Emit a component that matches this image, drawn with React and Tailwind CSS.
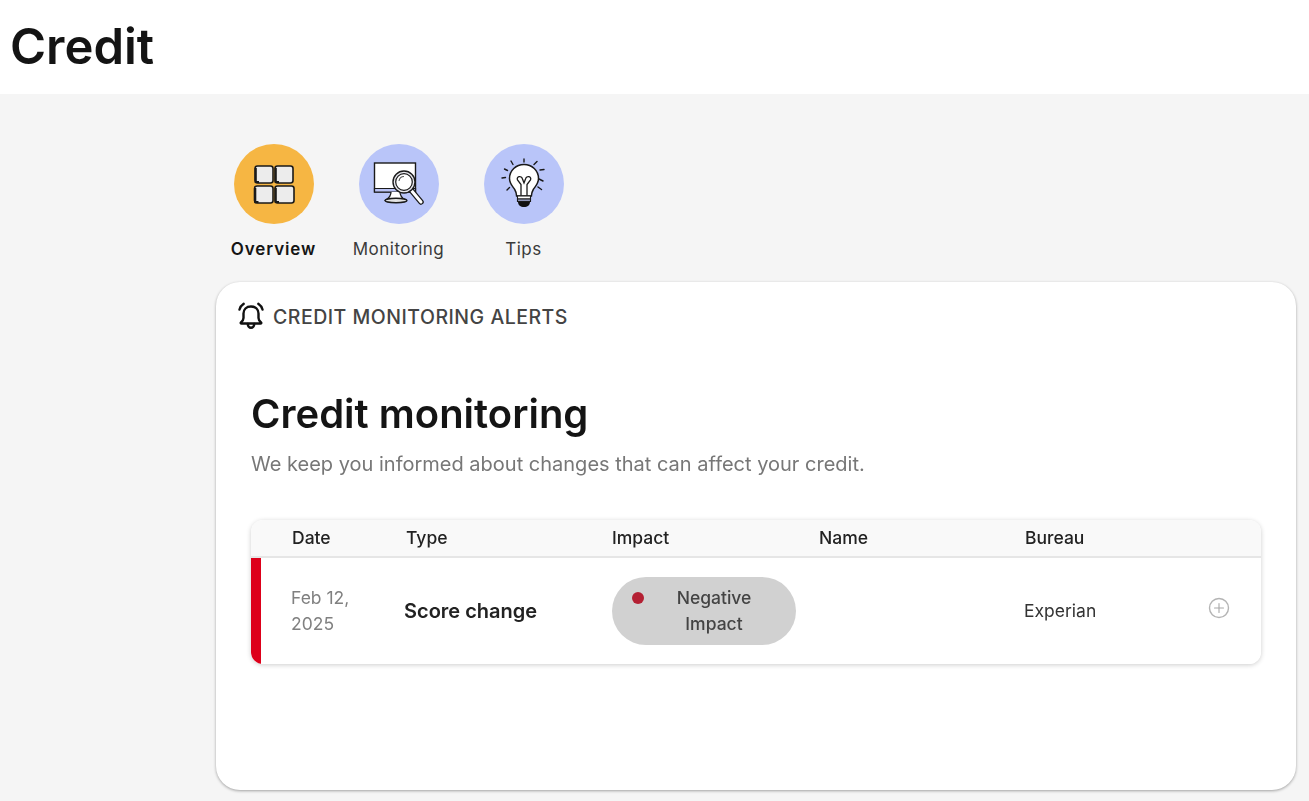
const OverviewIcon = () => (
  <svg width="42" height="40" viewBox="0 0 42 40" fill="none">
    {[
      [2, 2, 18, 17],
      [22, 2, 18, 17],
      [1.5, 22, 18.5, 17],
      [22, 22, 19, 17],
    ].map(([x, y, w, h]) => (
      <g key={`${x}-${y}`}>
        <rect x={x} y={y} width={w} height={h} rx="2.5" fill="#ececec" stroke="#1a1a1a" strokeWidth="1.6" />
        <path d={`M${x + 0.8} ${y + 2}V${y + h - 1}H${x + 4}`} stroke="#1a1a1a" strokeWidth="2" />
      </g>
    ))}
  </svg>
);

const MonitoringIcon = () => (
  <svg width="52" height="48" viewBox="0 0 52 48" fill="none">
    <rect x="1.500" y="3" width="41" height="29" fill="#fff" stroke="#1a1a1a" strokeWidth="1.400" />
    <path d="M1.500 28.500h41V32h-41z" fill="#b9c2f5" stroke="#1a1a1a" strokeWidth="1.200" />
    <path d="M18 32c0 4-2 6-5 8h19c-3-2-5-4-5-8" fill="#fff" stroke="#1a1a1a" strokeWidth="1.300" />
    <ellipse cx="23" cy="40.500" rx="11" ry="2.200" fill="#e4e4e4" stroke="#1a1a1a" strokeWidth="1.400" />
    <path d="M38 30l10 12" stroke="#1a1a1a" strokeWidth="5.500" strokeLinecap="round" />
    <path d="M38 30l10 12" stroke="#fff" strokeWidth="3" strokeLinecap="round" />
    <circle cx="31" cy="22" r="11" fill="#e8e8ee" stroke="#1a1a1a" strokeWidth="1.400" />
    <circle cx="31" cy="22" r="8.300" fill="#fff" stroke="#1a1a1a" strokeWidth="1.200" />
    <path d="M26 21c.5-3 2.500-4.500 5-4.500" stroke="#555" strokeWidth="1.100" />
  </svg>
);

const TipsIcon = () => (
  <svg width="46" height="52" viewBox="0 0 46 52" fill="none">
    <g stroke="#1a1a1a" strokeWidth="1.400" strokeLinecap="round">
      <path d="M23 1v3M10 3l2 3.500M36 3.500l-3 3M3.500 11l3 1.500M43 11.500l-4 .5M1 20l3.500-.5M38 21l4 2M6 32l2.500-2.500M37 29l3.500 2.500" />
    </g>
    <path d="M23 6.500c-8 0-14.500 6-14.500 14 0 5 3.200 8 5.200 11 1.300 2 1.700 4 1.900 6.500h14.800c.2-2.500.6-4.500 1.900-6.500 2-3 5.200-6 5.200-11 0-8-6.500-14-14.500-14z" fill="#fff" stroke="#1a1a1a" strokeWidth="1.500" />
    <path d="M20 37.500v-11l-3.500-4.500c-1.600-3.500 4.200-5 5-1l1.500 4 1.500-4c.8-4 6.600-2.500 5 1L26 26.500v11" stroke="#1a1a1a" strokeWidth="1.300" />
    <path d="M16.500 38h13v3h-13z" fill="#fff" stroke="#1a1a1a" strokeWidth="1.100" />
    <path d="M16.500 41h13v2.500h-13z" fill="#8f96b8" stroke="#1a1a1a" strokeWidth="1.100" />
    <path d="M17 44h12c0 3-2.500 5-6 5s-6-2-6-5z" fill="#111" />
  </svg>
);

const BellIcon = () => (
  <svg width="26" height="28" viewBox="0 0 26 28" fill="none" stroke="#111" strokeWidth="2.400" strokeLinecap="round" strokeLinejoin="round">
    <path d="M13 4.500c-4.800 0-7.500 3-7.500 7v4.500c0 1.800-1 3-2.500 4.300-.6.600-.2 1.200.5 1.200h19c.7 0 1.100-.6.500-1.200C21.500 19 20.500 17.800 20.500 16v-4.500c0-4-2.700-7-7.500-7z" />
    <path d="M9.800 22c0 2.200 1.400 3.800 3.200 3.800s3.200-1.600 3.200-3.800" />
    <path d="M1.500 7.500C2.200 5 3.600 3.200 5.700 1.800M24.500 7.500c-.7-2.500-2.100-4.300-4.200-5.700" />
  </svg>
);

const PlusCircle = () => (
  <svg width="22" height="22" viewBox="0 0 22 22" fill="none" stroke="#b4b4b4" strokeWidth="1.400" strokeLinecap="round">
    <circle cx="11" cy="11" r="9.500" />
    <path d="M11 6.500v9M6.500 11h9" stroke="#a8a8a8" strokeWidth="1.100" />
  </svg>
);

const tabs = [
  { label: "Overview", active: true, Icon: OverviewIcon },
  { label: "Monitoring", active: false, Icon: MonitoringIcon },
  { label: "Tips", active: false, Icon: TipsIcon },
];

export default function App() {
  return (
    <div className="h-[801px] overflow-hidden bg-[#f5f5f5] font-['Inter',sans-serif] text-[#141414]">
      <header className="flex h-[94px] items-start bg-white pl-[10px] pt-[18px]">
        <h1 className="text-[49px] leading-[58px] font-semibold">Credit</h1>
      </header>

      <main className="pl-[216px] pr-[13px]">
        <nav className="ml-[-5px] flex pt-[50px]">
          {tabs.map(({ label, active, Icon }) => (
            <div key={label} className="flex w-[125px] flex-col items-center">
              <div className={`flex h-20 w-20 items-center justify-center rounded-full ${active ? "bg-[#f6b643]" : "bg-[#b9c5f9]"}`}>
                <Icon />
              </div>
              <span className={`mt-[13px] text-[17px] leading-[24px] ${active ? "font-semibold tracking-[0.9px]" : "tracking-[0.5px] text-[#3a3a3a]"}`}>
                {label}
              </span>
            </div>
          ))}
        </nav>

        <section className="mt-[21px] h-[508px] rounded-[24px] bg-white pl-[22px] pt-[20px] shadow-[0_1px_3px_rgba(0,0,0,0.35)]">
          <div className="flex items-start gap-[9px]">
            <BellIcon />
            <h2 className="pt-[1px] text-[19.500px] leading-[28px] font-medium tracking-[0.5px] text-[#444]">
              CREDIT MONITORING ALERTS
            </h2>
          </div>

          <div className="pl-[13px] pr-[35px] pt-[59px] blur-[0.4px]">
            <h3 className="text-[40px] leading-[48px] font-semibold">Credit monitoring</h3>
            <p className="mt-[12px] text-[20px] leading-[28px] text-[#777]">
              We keep you informed about changes that can affect your credit.
            </p>

            <div className="mt-[42px] overflow-hidden rounded-[12px] shadow-[0_1px_5px_rgba(0,0,0,0.2)]">
              <div className="grid h-[38px] grid-cols-[114px_206px_207px_206px_1fr] items-center border-b-2 border-[#e6e6e6] bg-[#f9f9f9] pl-[41px] text-[17.500px] font-medium text-[#222]">
                <span>Date</span>
                <span>Type</span>
                <span>Impact</span>
                <span>Name</span>
                <span>Bureau</span>
              </div>
              <div className="grid h-[106px] grid-cols-[113px_208px_207px_205px_185px_1fr] items-center border-l-[10px] border-[#dd001a] bg-white pl-[30px] text-[17.500px]">
                <span className="w-[70px] leading-[26px] text-[#808080]">Feb 12, 2025</span>
                <span className="text-[20px] font-semibold text-[#222]">Score change</span>
                <div className="relative flex h-[68px] w-[184px] items-center justify-center rounded-[34px] bg-[#d1d1d1] pl-[20px]">
                  <span className="absolute left-[20px] top-[15px] h-3 w-3 rounded-full bg-[#b42033]" />
                  <span className="w-[100px] text-center font-medium leading-[26px] text-[#444]">Negative Impact</span>
                </div>
                <span />
                <span className="text-[#333]">Experian</span>
                <span className="-translate-x-px -translate-y-[3px]">
                  <PlusCircle />
                </span>
              </div>
            </div>
          </div>
        </section>
      </main>
    </div>
  );
}
